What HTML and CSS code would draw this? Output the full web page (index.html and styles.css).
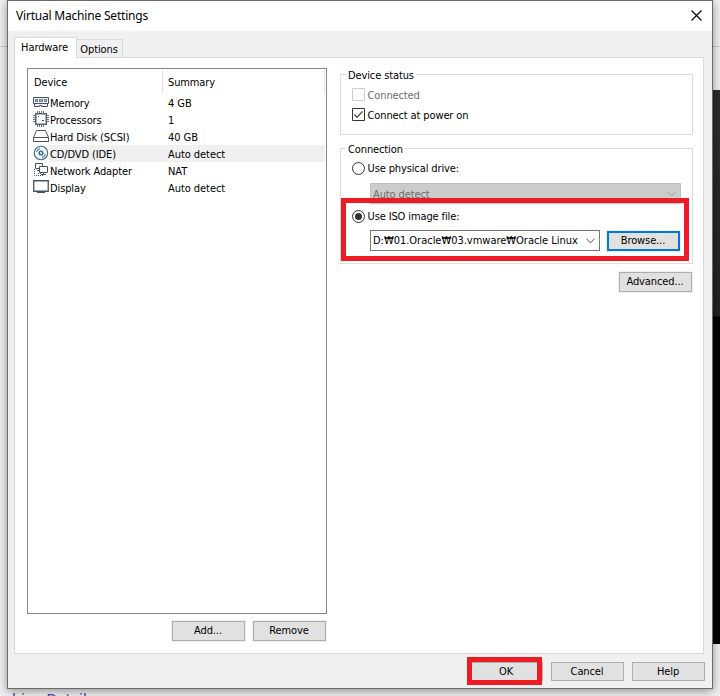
FILE: index.html
```html
<!DOCTYPE html>
<html lang="en">
<head>
<meta charset="utf-8">
<title>Virtual Machine Settings</title>
<link rel="stylesheet" href="styles.css">
</head>
<body>
<div class="desktop">
  <div class="backdrop-line"></div>
  <div class="backdrop-dark"></div>
  <div class="backdrop-text">hine Details</div>
  <main class="window">
    <header class="titlebar">
      <span class="title">Virtual Machine Settings</span>
      <svg class="close" width="11" height="11" viewBox="0 0 11 11"><path d="M.5.5l10 10M10.5.5l-10 10" stroke="#000" stroke-width="1.15" fill="none"/></svg>
    </header>
    <nav class="tabs"><span class="tab active">Hardware</span><span class="tab">Options</span></nav>
    <section class="page">
      <div class="left">
        <div class="list">
          <div class="head"><span class="c1">Device</span><span class="c2">Summary</span></div>
          <div class="row"><svg class="icon" viewBox="0 0 16 16"><path d="M.5 3.500h15v6H.5zM1.500 10v2.500h5v-1h2v1h6V10" fill="#eef1f4" stroke="#465461"/><path d="M2 5h3v3H2zM6 5h4v3H6zM11 5h3v3h-3z" fill="#70808d"/><path d="M3 6.500h1M7 6.500h2M12 6.500h1" stroke="#b7c0c7"/></svg><span class="name">Memory</span><span>4 GB</span></div>
          <div class="row"><svg class="icon" viewBox="0 0 16 16"><path d="M4.500 0v2M6.500 0v2M8.500 0v2M10.500 0v2M4.500 14v2M6.500 14v2M8.500 14v2M10.500 14v2M0 4.500h2M0 6.500h2M0 8.500h2M0 10.500h2M14 4.500h2M14 6.500h2M14 8.500h2M14 10.500h2" stroke="#657481"/><path d="M2.750 2.750h10.500v10.500H2.750z" fill="#fff" stroke="#566470" stroke-width="1.500"/><path d="M5 5h1v1H5zM9 9h2v1H9z" fill="#465461"/></svg><span class="name">Processors</span><span>1</span></div>
          <div class="row"><svg class="icon" viewBox="0 0 16 16"><path d="M3.500 2.500h9l3 7v4H.5v-4zM.5 9.500h15" fill="#fff" stroke="#465461"/><path d="M.5 13.500h15" stroke="#465461"/></svg><span class="name">Hard Disk (SCSI)</span><span>40 GB</span></div>
          <div class="row selected"><svg class="icon" viewBox="0 0 16 16"><circle cx="8" cy="8" r="6.700" fill="#f7fbfd" stroke="#466a85" stroke-width="1.100"/><circle cx="8" cy="8" r="1.800" fill="#fff" stroke="#387094" stroke-width="1.600"/><path d="M3.500 7A5 5 0 0 1 7 3.500M12.500 9A5 5 0 0 1 9 12.500" fill="none" stroke="#6996b5" stroke-width="1.300"/></svg><span class="name">CD/DVD (IDE)</span><span>Auto detect</span></div>
          <div class="row"><svg class="icon" viewBox="0 0 16 16"><path d="M1.500 7v6.500H10M5 11.500h3" fill="none" stroke="#465461" stroke-dasharray="1 1"/><path d="M2.500 1.500h7v5h-7z" fill="#fff" stroke="#465461"/><path d="M4 8.500h3" stroke="#465461"/><path d="M6.500 4.500h8v6h-8zM10.500 11v2M8 12.500h5" fill="#fff" stroke="#465461"/></svg><span class="name">Network Adapter</span><span>NAT</span></div>
          <div class="row"><svg class="icon" viewBox="0 0 16 16"><path d="M.75 1.750h14.500v10.500H.75z" fill="#fff" stroke="#465461" stroke-width="1.300"/><path d="M4 13.500h8" stroke="#465461"/></svg><span class="name">Display</span><span>Auto detect</span></div>
        </div>
        <div class="actions"><button>Add...</button><button>Remove</button></div>
      </div>
      <div class="right">
        <section class="group status">
          <h2>Device status</h2>
          <div class="option muted"><svg width="13" height="13"><path d="M.5.5h12v12H.5z" fill="#fff" stroke="#ccc"/></svg><span>Connected</span></div>
          <div class="option"><svg width="13" height="13"><path d="M.5.5h12v12H.5z" fill="#fff" stroke="#333"/><path d="M2.500 6.500L5 9.300l5.500-6" fill="none" stroke="#333" stroke-width="1.200"/></svg><span>Connect at power on</span></div>
        </section>
        <section class="group connection">
          <h2>Connection</h2>
          <div class="option"><svg width="13" height="13"><circle cx="6.500" cy="6.500" r="6" fill="#fff" stroke="#333"/></svg><span>Use physical drive:</span></div>
          <div class="combo disabled"><span>Auto detect</span><svg class="arrow" width="9" height="6"><path d="M.5.8l4 4 4-4" fill="none" stroke="#a0a0a0"/></svg></div>
          <div class="option iso"><svg width="13" height="13"><circle cx="6.500" cy="6.500" r="6" fill="#fff" stroke="#333"/><circle cx="6.500" cy="6.500" r="3.500" fill="#333"/></svg><span>Use ISO image file:</span></div>
          <div class="file"><div class="combo"><span class="path">D:₩01.Oracle₩03.vmware₩Oracle Linux</span><svg class="arrow" width="9" height="6"><path d="M.5.8l4 4 4-4" fill="none" stroke="#444"/></svg></div><button class="primary">Browse...</button></div>
        </section>
        <button class="advanced">Advanced...</button>
      </div>
    </section>
    <footer class="footer"><button>OK</button><button>Cancel</button><button>Help</button></footer>
  </main>
  <div class="mark mark-file"></div>
  <div class="mark mark-ok"></div>
</div>
</body>
</html>
```
FILE: styles.css
```css
* { box-sizing: border-box; }
body { margin: 0; width: 720px; height: 696px; overflow: hidden; font: 11px/17px "DejaVu Sans Condensed", "Noto Sans", sans-serif; letter-spacing: -.12px; color: #000; }
svg { display: block; flex: none; }
.desktop { position: relative; width: 720px; height: 696px; padding-left: 7px; background: #f0f0f0; overflow: hidden; }
.backdrop-line { position: absolute; left: 0; top: 46px; width: 720px; height: 1px; background: #d0d0d0; }
.backdrop-dark { position: absolute; right: 0; top: 90px; width: 20px; height: 554px; background: linear-gradient(#2d2d2b 0, #222 226px, #000 227px); }
.backdrop-text { position: absolute; left: 12px; top: 688px; color: #4b4a9b; font: 15px/20px "Noto Sans", sans-serif; letter-spacing: -.1px; white-space: nowrap; }
.window { position: relative; width: 706px; height: 689px; border: 1px solid #6a6a6a; background: #f0f0f0; box-shadow: 0 2px 9px rgba(0,0,0,.4); display: flex; flex-direction: column; }
.titlebar { height: 30px; flex: none; background: #fff; padding: 0 10px 2px 8px; display: flex; align-items: center; justify-content: space-between; }
.title { font: 12px/18px "Noto Sans", sans-serif; letter-spacing: -.2px; padding-top: 1px; }
.tabs { flex: none; margin: 6px 0 -1px 6px; display: flex; align-items: flex-end; height: 21px; position: relative; }
.tab { height: 19px; width: 46px; border: 1px solid #d9d9d9; border-left: 0; text-align: center; line-height: 19px; padding-right: 1px; }
.tab.active { width: 63px; height: 21px; border-left: 1px solid #d9d9d9; border-bottom: 0; background: #fff; line-height: 19px; padding-right: 2px; }
.page { width: 690px; height: 597px; flex: none; margin-left: 6px; border: 1px solid #d9d9d9; background: #fff; display: flex; padding: 10px 10px 0 12px; gap: 13px; }
.left { width: 300px; flex: none; }
.list { height: 546px; border: 1px solid #828790; padding: 0 1px; }
.head { height: 25px; padding-left: 5px; display: flex; align-items: center; line-height: 24px; }
.c1 { width: 129px; height: 24px; border-right: 1px solid #e2e2e2; padding-top: 1px; }
.c2 { flex: 1; height: 24px; border-right: 1px solid #e2e2e2; padding: 1px 0 0 5px; }
.row { height: 17px; display: flex; padding-left: 4px; white-space: nowrap; line-height: 19px; letter-spacing: -.06px; }
.row.selected { background: linear-gradient(90deg, #fff 20px, #f0f0f0 20px); }
.icon { width: 16px; height: 16px; margin-right: 1px; }
.name { width: 118px; letter-spacing: -.12px; }
.actions { display: flex; justify-content: flex-end; gap: 8px; margin: 7px 1px 0 0; }
button { width: 73px; height: 20px; padding: 0 1px 0 0; border: 1px solid #adadad; background: #e1e1e1; color: #000; font: inherit; letter-spacing: inherit; line-height: 18px; box-shadow: 0 0 0 1px #f0f0f0; }
.right { width: 353px; flex: none; padding-top: 6px; }
.group { position: relative; border: 1px solid #dcdcdc; padding: 0 11px; }
.status { height: 61px; padding-top: 10px; }
.connection { height: 116px; margin-top: 13px; padding-top: 11px; }
h2 { position: absolute; left: 5px; top: -8px; margin: 0; background: #fff; padding: 0 2px; font: inherit; letter-spacing: inherit; }
.option { height: 20px; display: flex; gap: 2.5px; align-items: center; }
.option svg { margin-top: -1px; }
.connection .option { height: 17px; line-height: 18px; }
.muted { color: #6d6d6d; }
.combo { width: 311px; height: 21px; border: 1px solid #777; background: #fff; display: flex; align-items: center; justify-content: space-between; padding: 0 4px 0 2px; white-space: nowrap; }
.combo.disabled { margin: 6px 0 0 18px; border-color: #bfbfbf; background: #ccc; color: #6d6d6d; line-height: 19px; padding-top: 1px; }
.connection .iso { margin-top: 4px; }
.file { margin: 5px 0 0 18px; display: flex; gap: 7px; align-items: center; }
.file .combo { width: 230px; }
.path { letter-spacing: -.02px; }
.primary { border: 2px solid #0078d7; line-height: 16px; }
.advanced { display: block; margin: 8px 1px 0 auto; }
.footer { display: flex; justify-content: flex-end; gap: 8px; margin-top: 8px; padding-right: 7px; }
.footer button { height: 19px; box-shadow: none; }
.mark { position: absolute; border: 5px solid #ed1c24; }
.mark-file { left: 341px; top: 198px; width: 348px; height: 63px; }
.mark-ok { left: 467px; top: 657px; width: 75px; height: 28px; }
```
